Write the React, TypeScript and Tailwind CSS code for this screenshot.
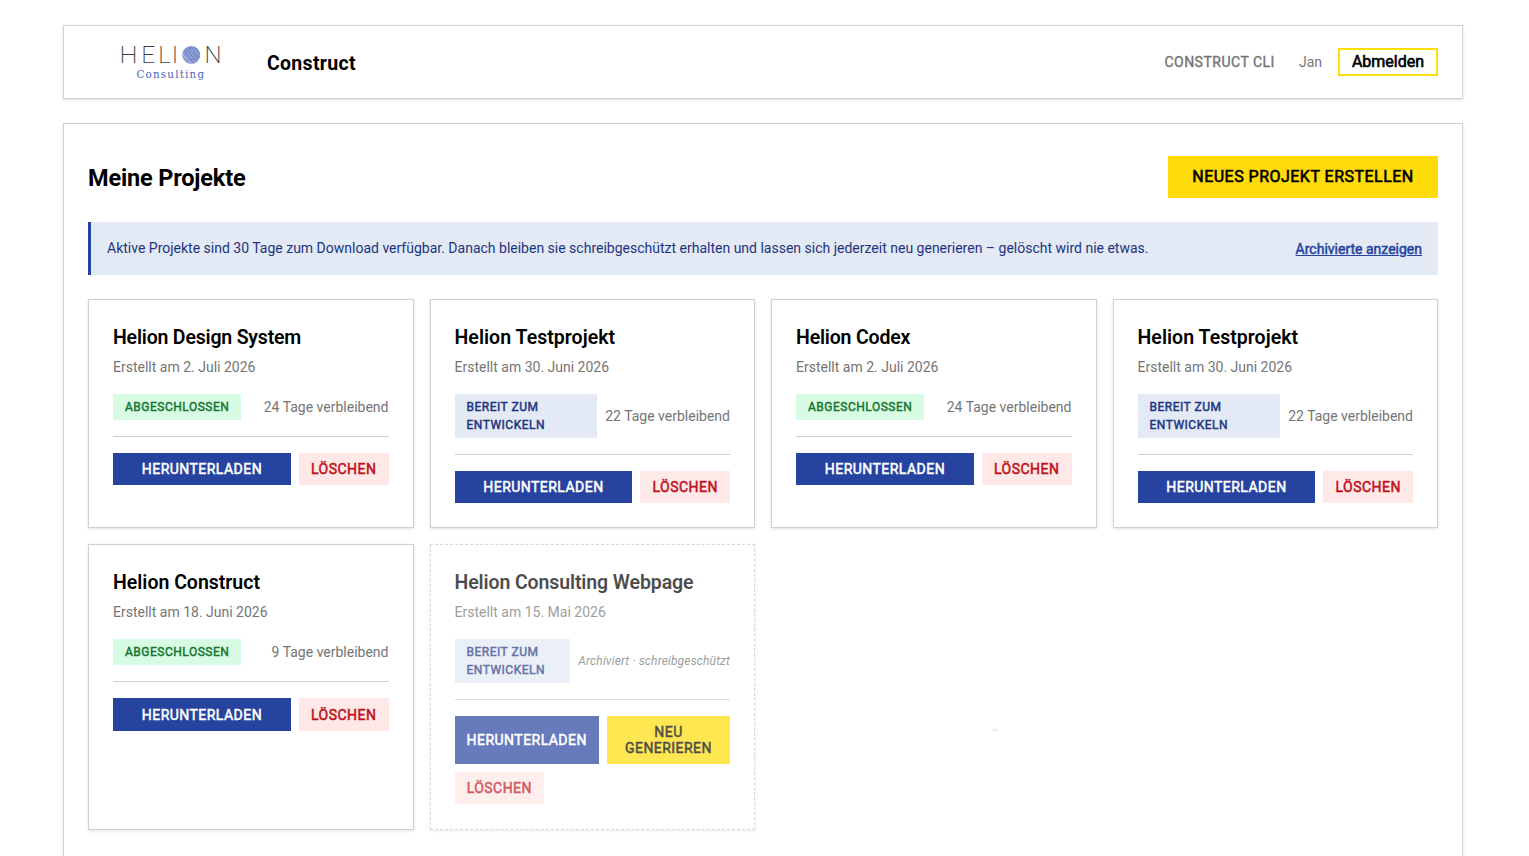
type Project = {
  title: string;
  created: string;
  status: 'done' | 'ready';
  note: string;
  archived?: boolean;
  titleClass: string;
};

const projects: Project[] = [
  { title: 'Helion Design System', created: '2. Juli 2026', status: 'done', note: '24 Tage verbleibend', titleClass: 'tracking-[-0.19px]' },
  { title: 'Helion Testprojekt', created: '30. Juni 2026', status: 'ready', note: '22 Tage verbleibend', titleClass: 'tracking-[0.04px]' },
  { title: 'Helion Codex', created: '2. Juli 2026', status: 'done', note: '24 Tage verbleibend', titleClass: 'tracking-[-0.17px]' },
  { title: 'Helion Testprojekt', created: '30. Juni 2026', status: 'ready', note: '22 Tage verbleibend', titleClass: 'tracking-[0.04px]' },
  { title: 'Helion Construct', created: '18. Juni 2026', status: 'done', note: '9 Tage verbleibend', titleClass: 'tracking-[-0.01px]' },
  { title: 'Helion Consulting Webpage', created: '15. Mai 2026', status: 'ready', note: 'Archiviert · schreibgeschützt', archived: true, titleClass: 'tracking-[-0.11px]' },
];

function Logo() {
  return (
    <svg width="104" height="52" viewBox="0 -6 104 52" className="shrink-0" aria-label="Helion Consulting">
      <defs>
        <clipPath id="ball">
          <circle cx="71.2" cy="13" r="9" />
        </clipPath>
      </defs>
      <g fontFamily="Roboto, sans-serif" fontWeight="200" fontSize="24" fill="#3c3c3c">
        <text x="-0.4" y="21" textLength="18" lengthAdjust="spacingAndGlyphs">H</text>
        <text x="21.3" y="21" textLength="14" lengthAdjust="spacingAndGlyphs">E</text>
        <text x="38.3" y="21" textLength="12.5" lengthAdjust="spacingAndGlyphs">L</text>
        <text x="51.8" y="21">I</text>
        <text x="84.6" y="21">N</text>
      </g>
      <circle cx="71.2" cy="13" r="9" fill="#8e9fd6" />
      <g clipPath="url(#ball)" fill="none" strokeWidth="0.7">
        <path d="M61 6l16 19M63 4l17 19M65 2l17 19M68 2l15 17M71 1l13 15" stroke="#5a71c0" />
        <path d="M60 10l15 15M62 16l8 9M74 2l9 10" stroke="#c6cfed" />
        <path d="M64 9c5-3 8-4 14-2M64 17c5 2 10 1 15-3" stroke="#6f84c9" />
      </g>
      <text
        x="16.5"
        y="35.5"
        fontFamily="'DejaVu Serif Condensed', 'DejaVu Serif', serif"
        fontStretch="condensed"
        fontSize="11.5"
        textLength="67.5"
        fill="#4a66bb"
      >
        Consulting
      </text>
    </svg>
  );
}

function Header() {
  return (
    <header className="flex h-[74px] items-center justify-between border border-[#d0d0d0] bg-white pr-6 pl-14 shadow-[0_1px_3px_rgba(0,0,0,0.12)]">
      <div className="flex items-center gap-[43px]">
        <Logo />
        <span className="pt-1 text-[19.5px] leading-6 font-bold tracking-[0.3px]">Construct</span>
      </div>
      <nav className="flex items-center">
        <a className="mr-6 text-[14px] leading-5 tracking-[0.5px] text-[#757575] [-webkit-text-stroke:0.4px]">CONSTRUCT CLI</a>
        <span className="mr-4 text-[14px] leading-5 text-[#757575]">Jan</span>
        <button className="flex h-7 w-[100px] items-center justify-center border-2 border-[#ffdd0a] text-[16px] leading-5 [-webkit-text-stroke:0.6px]">
          Abmelden
        </button>
      </nav>
    </header>
  );
}

function Card({ project }: { project: Project }) {
  const { archived, status } = project;
  return (
    <article
      className={
        'flex flex-col border bg-white px-6 pt-6 shadow-[0_1px_3px_rgba(0,0,0,0.12)] ' +
        (archived ? 'border-dashed border-[#c8c8c8] pb-[24.5px] opacity-70' : 'border-[#d0d0d0] pb-6')
      }
    >
      <h2 className={'h-[26px] pt-px text-[19.5px] leading-[26px] font-semibold whitespace-nowrap ' + project.titleClass}>
        {project.title}
      </h2>
      <p className="mt-[6px] text-[14px] leading-[22px] text-[#757575]">Erstellt am {project.created}</p>
      <div className="mt-4 flex items-center justify-between gap-2">
        {status === 'done' ? (
          <span className="bg-[#d8fbe3] px-3 py-1 text-[12px] leading-[18px] tracking-[0.5px] text-[#14752f] [-webkit-text-stroke:0.45px]">
            ABGESCHLOSSEN
          </span>
        ) : (
          <span className="bg-[#e3e9f5] px-3 py-1 text-[12px] leading-[18px] tracking-[0.5px] text-[#1c3480] [-webkit-text-stroke:0.45px]">
            BEREIT ZUM ENTWICKELN
          </span>
        )}
        <span
          className={
            'shrink-0 whitespace-nowrap text-[#757575] ' +
            (archived ? 'text-[12px] leading-5 italic tracking-[0.15px]' : 'text-[14px] leading-5')
          }
        >
          {project.note}
        </span>
      </div>
      <div className="mt-4 flex flex-wrap gap-2 border-t border-[#d0d0d0] pt-4 text-[14px] leading-4 tracking-[0.46px] [-webkit-text-stroke:0.5px]">
        <button className="min-h-[32.4px] flex-1 bg-[#2643a0] px-2 py-2 text-white">HERUNTERLADEN</button>
        {archived && <button className="w-[123px] bg-[#ffdd0a] px-3 py-2">NEU GENERIEREN</button>}
        <button
          className={'w-[89.6px] bg-[#fee8e8] text-[#bf1118] ' + (archived ? 'h-8' : 'h-[32.4px]')}
        >
          LÖSCHEN
        </button>
      </div>
    </article>
  );
}

export default function App() {
  return (
    <div className="relative h-[856px] overflow-hidden bg-white pt-[25px] pl-[63px] font-[Roboto,'Liberation_Sans',sans-serif] text-black">
      <div className="flex w-[1400px] flex-col gap-6">
        <Header />
        <main className="min-h-[800px] border border-[#d0d0d0] bg-white px-6 pt-8 shadow-[0_1px_3px_rgba(0,0,0,0.12)]">
          <div className="flex items-center justify-between">
            <h1 className="pt-0.5 text-[23.5px] leading-8 font-bold tracking-[-0.17px]">Meine Projekte</h1>
            <button className="h-[42px] w-[270px] bg-[#ffdb09] text-[16px] leading-5 tracking-[0.48px] [-webkit-text-stroke:0.6px]">
              NEUES PROJEKT ERSTELLEN
            </button>
          </div>
          <div className="mt-6 flex h-[53px] items-center justify-between border-l-[3px] border-[#2643a0] bg-[#e3e9f5] px-4 text-[14px] leading-5 text-[#1c3480]">
            <p className="pb-px">
              Aktive Projekte sind 30 Tage zum Download verfügbar. Danach bleiben sie schreibgeschützt erhalten und lassen
              sich jederzeit neu generieren – gelöscht wird nie etwas.
            </p>
            <a className="text-[#2643a0] underline [-webkit-text-stroke:0.5px]">Archivierte anzeigen</a>
          </div>
          <div className="mt-6 grid grid-cols-4 gap-4">
            {projects.map((project, index) => (
              <Card key={index} project={project} />
            ))}
          </div>
        </main>
      </div>
      <span className="absolute top-[728px] left-[992px] h-[3px] w-[6px] rounded-t-full bg-[#fde8e8]" />
    </div>
  );
}
